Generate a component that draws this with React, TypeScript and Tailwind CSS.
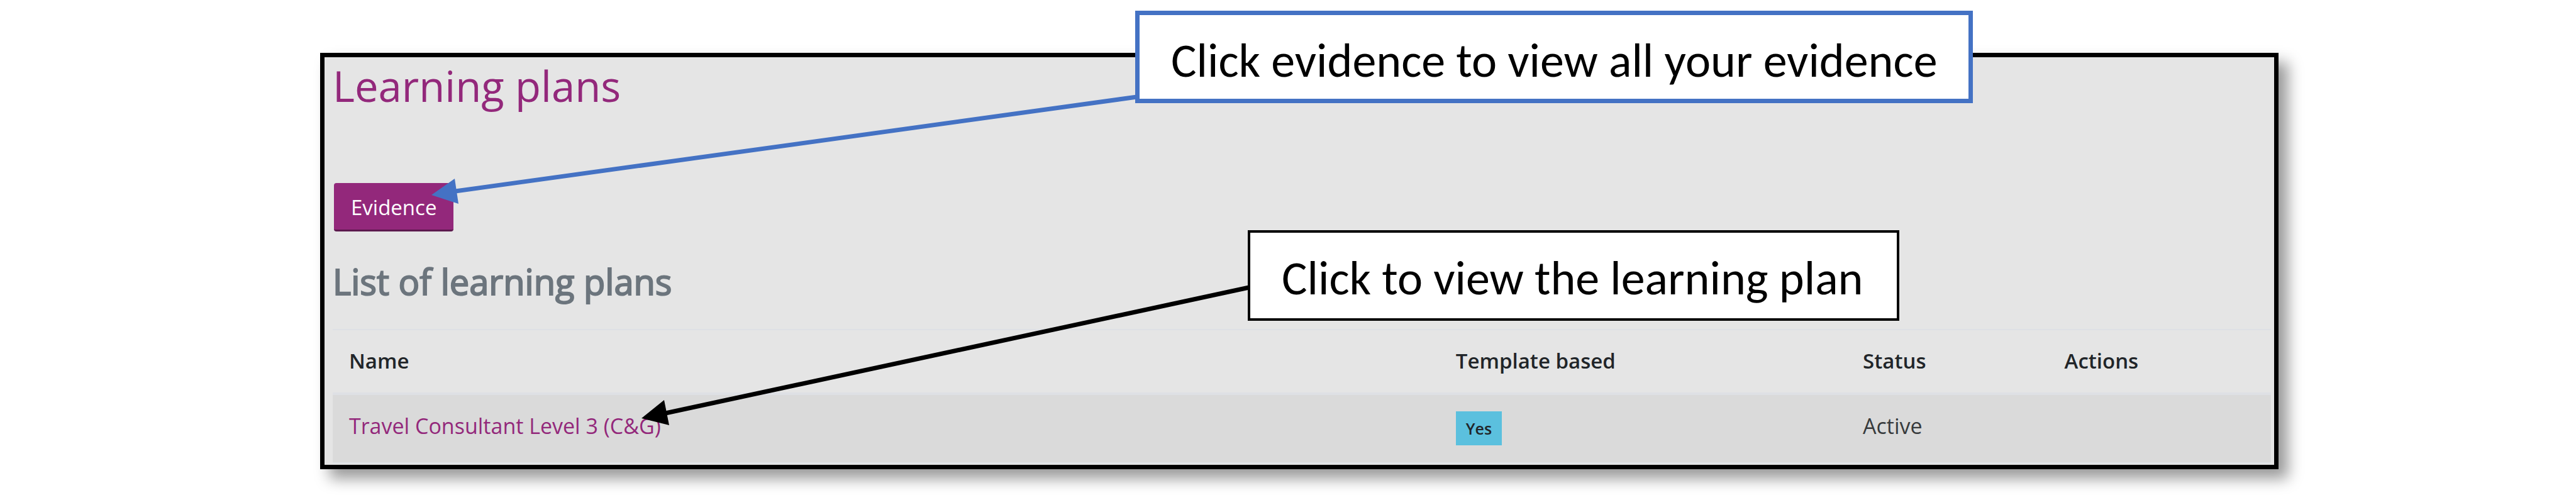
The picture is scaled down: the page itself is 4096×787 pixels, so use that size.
import type { ReactNode } from "react";

type Plan = { name: string; templateBased: boolean; status: string };

const plans: Plan[] = [
  { name: "Travel Consultant Level 3 (C&G)", templateBased: true, status: "Active" },
];

const columns = [
  { label: "Name", width: "w-[57.1%]" },
  { label: "Template based", width: "w-[21%]" },
  { label: "Status", width: "w-[10.4%]" },
  { label: "Actions", width: "w-[11.5%]" },
];

function Callout({ className, children }: { className: string; children: ReactNode }) {
  return (
    <p
      className={`absolute whitespace-nowrap bg-white text-black font-['Carlito','Lato',sans-serif] text-[76px] leading-[88px] ${className}`}
    >
      {children}
    </p>
  );
}

function Arrows() {
  return (
    <svg className="pointer-events-none absolute left-0 top-0 h-full w-full" aria-hidden="true">
      <line x1="1808" y1="154" x2="724" y2="304" stroke="#4472c4" strokeWidth="7" />
      <polygon points="686,310 723,284 729,324" fill="#4472c4" />
      <line x1="1986" y1="457" x2="1058" y2="657" stroke="#000" strokeWidth="7" />
      <polygon points="1020,665 1056,636 1064,676" fill="#000" />
    </svg>
  );
}

function PlansTable() {
  return (
    <table className="mt-9 w-full table-fixed border-separate border-spacing-0 text-left text-[34px] leading-[48px]">
      <thead>
        <tr>
          {columns.map((column) => (
            <th
              key={column.label}
              scope="col"
              className={`${column.width} border-b-4 border-t-2 border-[#dee0e5] px-[26px] pb-[26px] pt-[25px] text-[33px] font-semibold text-[#212529]`}
            >
              {column.label}
            </th>
          ))}
        </tr>
      </thead>
      <tbody>
        {plans.map((plan) => (
          <tr key={plan.name} className="bg-[#dadada] align-top text-[#373a3c]">
            <td className="border-b-2 border-[#dee2e6] px-[26px] pb-[34px] pt-[25px]">
              <a href="#plan" className="text-[#93287b]">
                {plan.name}
              </a>
            </td>
            <td className="border-b-2 border-[#dee2e6] px-[26px] pt-[26px]">
              <span className="inline-block bg-[#5bc0de] px-4 text-[25px] font-semibold leading-[54px] text-[#212529]">
                {plan.templateBased ? "Yes" : "No"}
              </span>
            </td>
            <td className="border-b-2 border-[#dee2e6] px-[26px] pt-[25px]">{plan.status}</td>
            <td className="border-b-2 border-[#dee2e6]" />
          </tr>
        ))}
      </tbody>
    </table>
  );
}

export default function App() {
  return (
    <main className="relative bg-white pb-[41px] pl-[509px] pr-[473px] pt-[84px] font-['Open_Sans',sans-serif]">
      <section className="border-[7px] border-black bg-[#e5e5e5] pb-0.5 pl-[13px] pr-[5px] pt-[5px] shadow-[15px_15px_22px_rgba(0,0,0,0.4)]">
        <h1 className="text-[67px] leading-[80px] text-[#93287b]">Learning plans</h1>
        <button
          type="button"
          className="ml-[2px] mt-[115px] block rounded-[4px] border-b-[3px] border-[#5c194d] bg-[#93287b] px-[27px] pb-[11px] pt-[15px] text-[33px] leading-[48px] text-white"
        >
          Evidence
        </button>
        <h2 className="mt-[39px] text-[56px] leading-[80px] text-[#6c757d] [-webkit-text-stroke:2px_#6c757d]">
          List of learning plans
        </h2>
        <PlansTable />
      </section>

      <Arrows />
      <Callout className="left-[1805px] top-[17px] border-[7px] border-[#4472c4] pb-[17px] pl-[50px] pr-[49px] pt-[28px]">
        Click evidence to view all your evidence
      </Callout>
      <Callout className="left-[1984px] top-[366px] border-4 border-black pb-5 pl-[50px] pr-[54px] pt-7">
        Click to view the learning plan
      </Callout>
    </main>
  );
}
